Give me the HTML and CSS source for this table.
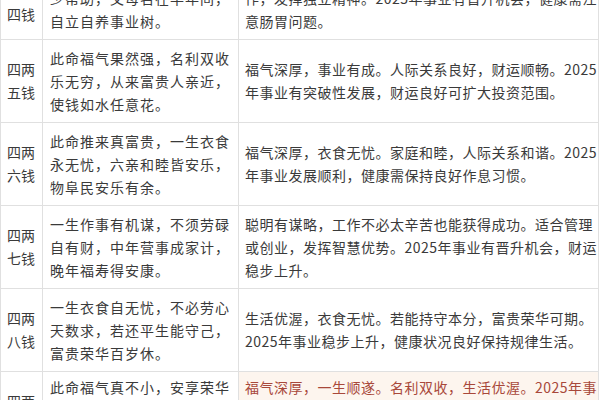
FILE: index.html
```html
<!DOCTYPE html>
<html lang="zh-CN">
<head>
<meta charset="utf-8">
<link rel="stylesheet" href="styles.css">
</head>
<body>
<div class="table">
  <div class="row first">
    <div class="cell label label-low"><div>四两<br>四钱</div></div>
    <div class="cell verse"><div>来事自然有所期，兄弟六亲<br>少帮助，父母名在半年间，<br>自立自养事业树。</div></div>
    <div class="cell note"><div>此命聪明能干，适合自主创业或从事技术性工<br>作，发挥独立精神。2025年事业有晋升机会，健康需注<br>意肠胃问题。</div></div>
  </div>
  <div class="row">
    <div class="cell label"><div>四两<br>五钱</div></div>
    <div class="cell verse"><div>此命福气果然强，名利双收<br>乐无穷，从来富贵人亲近，<br>使钱如水任意花。</div></div>
    <div class="cell note"><div>福气深厚，事业有成。人际关系良好，财运顺畅。2025<br>年事业有突破性发展，财运良好可扩大投资范围。</div></div>
  </div>
  <div class="row">
    <div class="cell label"><div>四两<br>六钱</div></div>
    <div class="cell verse"><div>此命推来真富贵，一生衣食<br>永无忧，六亲和睦皆安乐，<br>物阜民安乐有余。</div></div>
    <div class="cell note"><div>福气深厚，衣食无忧。家庭和睦，人际关系和谐。2025<br>年事业发展顺利，健康需保持良好作息习惯。</div></div>
  </div>
  <div class="row">
    <div class="cell label"><div>四两<br>七钱</div></div>
    <div class="cell verse"><div>一生作事有机谋，不须劳碌<br>自有财，中年营事成家计，<br>晚年福寿得安康。</div></div>
    <div class="cell note"><div>聪明有谋略，工作不必太辛苦也能获得成功。适合管理<br>或创业，发挥智慧优势。2025年事业有晋升机会，财运<br>稳步上升。</div></div>
  </div>
  <div class="row">
    <div class="cell label"><div>四两<br>八钱</div></div>
    <div class="cell verse"><div>一生衣食自无忧，不必劳心<br>天数求，若还平生能守己，<br>富贵荣华百岁休。</div></div>
    <div class="cell note"><div>生活优渥，衣食无忧。若能持守本分，富贵荣华可期。<br>2025年事业稳步上升，健康状况良好保持规律生活。</div></div>
  </div>
  <div class="row last">
    <div class="cell label"><div>四两<br>九钱</div></div>
    <div class="cell verse top"><div>此命福气真不小，安享荣华<br>福禄全，一生衣食皆丰足，<br>名利双收乐自然。</div></div>
    <div class="cell note top highlight"><div>福气深厚，一生顺遂。名利双收，生活优渥。2025年事<br>业发展顺利，财运亨通，宜把握机遇。</div></div>
  </div>
</div>
</body>
</html>
```

FILE: styles.css
```css
html, body {
  margin: 0;
  padding: 0;
  background: #ffffff;
  overflow: hidden;
}

body {
  font-family: "Noto Sans CJK SC", "Noto Sans", sans-serif;
  color: #3a3a3a;
  font-size: 14px;
  line-height: 23px;
}

.table {
  margin-top: -43px;
  width: 599px;
}

.row {
  display: grid;
  grid-template-columns: 43px 196px 360px;
  height: 83px;
}

.cell {
  display: flex;
  flex-direction: column;
  justify-content: center;
  border-right: 1px solid #e0e0e0;
  border-bottom: 1px solid #e0e0e0;
  white-space: nowrap;
  overflow: hidden;
}

.label {
  border-left: 1px solid #e0e0e0;
  align-items: center;
  padding-right: 1px;
}

.label-low {
  justify-content: flex-end;
  padding-bottom: 13px;
}

.verse {
  padding-left: 7px;
  letter-spacing: 1px;
}

.note {
  padding-left: 6px;
  letter-spacing: 0.5px;
}

.top {
  justify-content: flex-start;
  padding-top: 4px;
}

.highlight {
  background: #fdf5ee;
  color: #a8483a;
}
```
